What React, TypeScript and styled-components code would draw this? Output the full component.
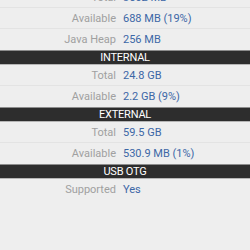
import React from "react";
import styled, { createGlobalStyle } from "styled-components";

const Global = createGlobalStyle`
  html, body { margin: 0; padding: 0; background: #eeeeee; overflow: hidden; }
  body { font-family: Roboto, "Noto Sans", sans-serif; }
`;

const Screen = styled.div`
  width: 250px;
  height: 250px;
  overflow: hidden;
  background: #eeeeee;
`;

const List = styled.div`
  display: flex;
  flex-direction: column;
  margin-top: -13px;
`;

const Row = styled.div<{ $last?: boolean }>`
  display: grid;
  grid-template-columns: 116px 1fr;
  column-gap: 7px;
  align-items: center;
  height: 20px;
  border-bottom: 1px solid ${(p) => (p.$last ? "transparent" : "#e3e3e3")};
  font-size: 11px;
`;

const Label = styled.span`
  text-align: right;
  color: #a0a0a0;
  white-space: nowrap;
`;

const Value = styled.span`
  color: #3c67a6;
  white-space: nowrap;
`;

const Header = styled.div`
  height: 13px;
  display: flex;
  align-items: center;
  justify-content: center;
  background: #2d2d2d;
  border-top: 1px solid #8c8c8c;
  border-bottom: 1px solid #b5b5b5;
  color: #ffffff;
  font-size: 11px;
  letter-spacing: -0.2px;
`;

type Item = { kind: "row"; label: string; value: string; last?: boolean } | { kind: "header"; title: string };

const items: Item[] = [
  { kind: "row", label: "Total", value: "3562 MB" },
  { kind: "row", label: "Available", value: "688 MB (19%)" },
  { kind: "row", label: "Java Heap", value: "256 MB", last: true },
  { kind: "header", title: "INTERNAL" },
  { kind: "row", label: "Total", value: "24.8 GB" },
  { kind: "row", label: "Available", value: "2.2 GB (9%)", last: true },
  { kind: "header", title: "EXTERNAL" },
  { kind: "row", label: "Total", value: "59.5 GB" },
  { kind: "row", label: "Available", value: "530.9 MB (1%)", last: true },
  { kind: "header", title: "USB OTG" },
  { kind: "row", label: "Supported", value: "Yes", last: true },
];

export default function App() {
  return (
    <Screen>
      <Global />
      <List>
        {items.map((it, i) =>
          it.kind === "header" ? (
            <Header key={i}>{it.title}</Header>
          ) : (
            <Row key={i} $last={it.last}>
              <Label>{it.label}</Label>
              <Value>{it.value}</Value>
            </Row>
          )
        )}
      </List>
    </Screen>
  );
}
